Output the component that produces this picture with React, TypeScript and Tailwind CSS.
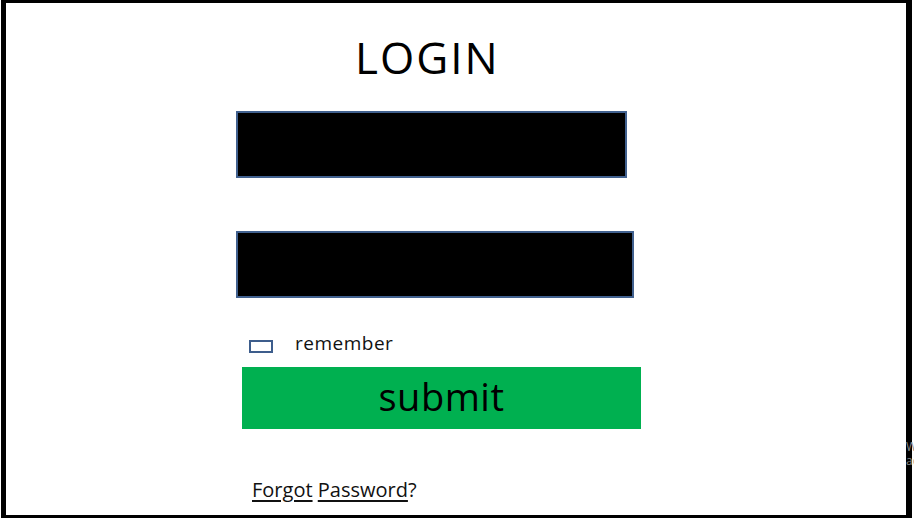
import React from "react";

export default function App() {
  return (
    <div
      className="relative w-[914px] h-[520px] bg-white overflow-hidden"
      style={{ fontFamily: '"Open Sans", "Noto Sans", sans-serif' }}
    >
      <div className="ml-[1px] w-[911px] h-[518px] border-l-[5px] border-r-[6px] border-t-[3px] border-b-[3px] border-black flex flex-col items-start">
        <h1 className="mt-[32px] ml-[349px] text-[44px] leading-[44px] tracking-[2px] font-normal text-black">
          LOGIN
        </h1>
        <div className="mt-[32px] ml-[230px] w-[391px] h-[67px] border-2 border-[#41618f] bg-black" />
        <div className="mt-[53px] ml-[230px] w-[398px] h-[67px] border-2 border-[#41618f] bg-black" />
        <div className="mt-[36px] ml-[243px] flex items-start">
          <div className="mt-[6px] w-[24px] h-[13px] border-2 border-[#3d5d8c] bg-white" />
          <span className="ml-[22px] text-[19px] leading-[19px] tracking-[0.5px] text-[#111]">
            remember
          </span>
        </div>
        <button className="mt-[14px] ml-[236px] w-[399px] h-[62px] bg-[#00b050] flex items-center justify-center pb-[5px]">
          <span className="text-[38px] leading-[38px] tracking-[0.5px] text-black">submit</span>
        </button>
        <div className="mt-[51px] ml-[246px] text-[20px] leading-[20px] text-[#111]">
          <span className="underline underline-offset-[3px] decoration-[1.5px]">Forgot</span>{" "}
          <span className="underline underline-offset-[3px] decoration-[1.5px]">Password</span>?
        </div>
      </div>
      <div className="absolute left-[906px] top-[440px] text-[12px] leading-[14px] text-[#8a8a8a] whitespace-nowrap">
        <div>W</div>
        <div>ac</div>
      </div>
    </div>
  );
}
